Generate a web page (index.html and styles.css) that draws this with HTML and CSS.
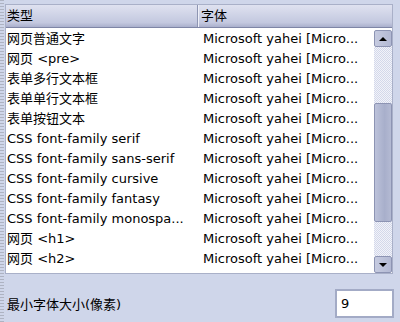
FILE: index.html
```html
<!DOCTYPE html>
<html lang="zh-CN">
  <head>
    <meta charset="UTF-8" />
    <title>字体设置</title>
    <link rel="stylesheet" href="styles.css">
  </head>
  <body>
    <div class="panel">
      <div class="list-box">
        <div class="list-head">
          <div class="col col-type">类型</div>
          <div class="col col-font">字体</div>
        </div>
        <div class="list-body">
          <div class="rows">
            <div class="row"><span class="cell">网页普通文字</span><span class="cell">Microsoft yahei [Micro...</span></div>
            <div class="row"><span class="cell">网页 &lt;pre&gt;</span><span class="cell">Microsoft yahei [Micro...</span></div>
            <div class="row"><span class="cell">表单多行文本框</span><span class="cell">Microsoft yahei [Micro...</span></div>
            <div class="row"><span class="cell">表单单行文本框</span><span class="cell">Microsoft yahei [Micro...</span></div>
            <div class="row"><span class="cell">表单按钮文本</span><span class="cell">Microsoft yahei [Micro...</span></div>
            <div class="row"><span class="cell">CSS font-family serif</span><span class="cell">Microsoft yahei [Micro...</span></div>
            <div class="row"><span class="cell">CSS font-family sans-serif</span><span class="cell">Microsoft yahei [Micro...</span></div>
            <div class="row"><span class="cell">CSS font-family cursive</span><span class="cell">Microsoft yahei [Micro...</span></div>
            <div class="row"><span class="cell">CSS font-family fantasy</span><span class="cell">Microsoft yahei [Micro...</span></div>
            <div class="row"><span class="cell">CSS font-family monospa...</span><span class="cell">Microsoft yahei [Micro...</span></div>
            <div class="row"><span class="cell">网页 &lt;h1&gt;</span><span class="cell">Microsoft yahei [Micro...</span></div>
            <div class="row"><span class="cell">网页 &lt;h2&gt;</span><span class="cell">Microsoft yahei [Micro...</span></div>
          </div>
          <div class="scrollbar">
            <div class="sb-btn"><span class="arrow up"></span></div>
            <div class="sb-track">
              <div class="sb-thumb"></div>
            </div>
            <div class="sb-btn"><span class="arrow down"></span></div>
          </div>
        </div>
      </div>
      <div class="min-size">
        <label class="min-label" for="min-size">最小字体大小(像素)</label>
        <input class="min-input" id="min-size" type="text" value="9" />
      </div>
    </div>
  </body>
</html>
```

FILE: styles.css
```css
html,
body {
  margin: 0;
  padding: 0;
}

body {
  width: 400px;
  height: 322px;
  overflow: hidden;
  background-color: #cfd6ea;
  font-family: "DejaVu Sans", "Noto Sans CJK SC", sans-serif;
  font-size: 13px;
  color: #000;
}

.panel {
  height: 100%;
  padding: 4px 7px 0 5px;
  box-sizing: border-box;
  background:
    repeating-linear-gradient(0deg, #aeb3c2 0 1px, transparent 1px 3px) left top / 4px 100% no-repeat,
    #cfd6ea;
}

/* 列表框 */
.list-box {
  height: 268px;
  background: #fff;
  border: 1px solid #a9b0c8;
  display: flex;
  flex-direction: column;
  overflow: hidden;
}

.list-head {
  display: flex;
  height: 22px;
  background: linear-gradient(#dfe2f0, #c3c8df 80%, #aab0cc);
  border-bottom: 1px solid #7f86a6;
  flex-shrink: 0;
}

.col {
  line-height: 22px;
  padding-left: 1px;
}

.col-type {
  width: 190px;
  border-right: 1px solid #8e95b2;
  box-shadow: 1px 0 0 #eef0f8;
}

.col-font {
  flex: 1;
  padding-left: 3px;
}

.list-body {
  flex: 1;
  display: flex;
  min-height: 0;
}

.rows {
  flex: 1;
  overflow: hidden;
  padding-top: 1px;
  border-bottom: 4px solid #fff;
}

.row {
  display: flex;
  height: 20px;
  line-height: 20px;
  white-space: nowrap;
}

.cell {
  overflow: hidden;
}

.cell:first-child {
  width: 195px;
  padding-left: 1px;
}

.cell:last-child {
  padding-left: 1px;
}

/* 滚动条 */
.scrollbar {
  width: 18px;
  display: flex;
  flex-direction: column;
  padding-top: 2px;
}

.sb-btn {
  height: 17px;
  background: linear-gradient(90deg, #c6cbe0, #b3b9d3);
  border: 1px solid #8d94b3;
  border-radius: 2px;
  display: flex;
  align-items: center;
  justify-content: center;
  box-sizing: border-box;
}

.arrow {
  width: 0;
  height: 0;
  border-left: 4px solid transparent;
  border-right: 4px solid transparent;
}

.arrow.up {
  border-bottom: 4px solid #000;
}

.arrow.down {
  border-top: 4px solid #000;
}

.sb-track {
  flex: 1;
  padding: 56px 0 34px;
  background-color: #e6e9f4;
  background-image: repeating-conic-gradient(#d3d8ea 0 25%, #f2f3f9 0 50%);
  background-size: 2px 2px;
}

.sb-thumb {
  height: 100%;
  background: linear-gradient(90deg, #bcc2da, #a8afcb 60%, #b4bad3);
  border: 1px solid #8d94b3;
  border-radius: 2px;
  box-sizing: border-box;
}

/* 最小字体大小 */
.min-size {
  display: flex;
  align-items: center;
  justify-content: space-between;
  margin-top: 15px;
  margin-right: -1px;
}

.min-label {
  padding-left: 2px;
}

.min-input {
  width: 59px;
  height: 29px;
  box-sizing: border-box;
  border: 2px solid #a3abc6;
  background: #fff;
  font: inherit;
  padding: 0 4px;
  outline: none;
}
```
